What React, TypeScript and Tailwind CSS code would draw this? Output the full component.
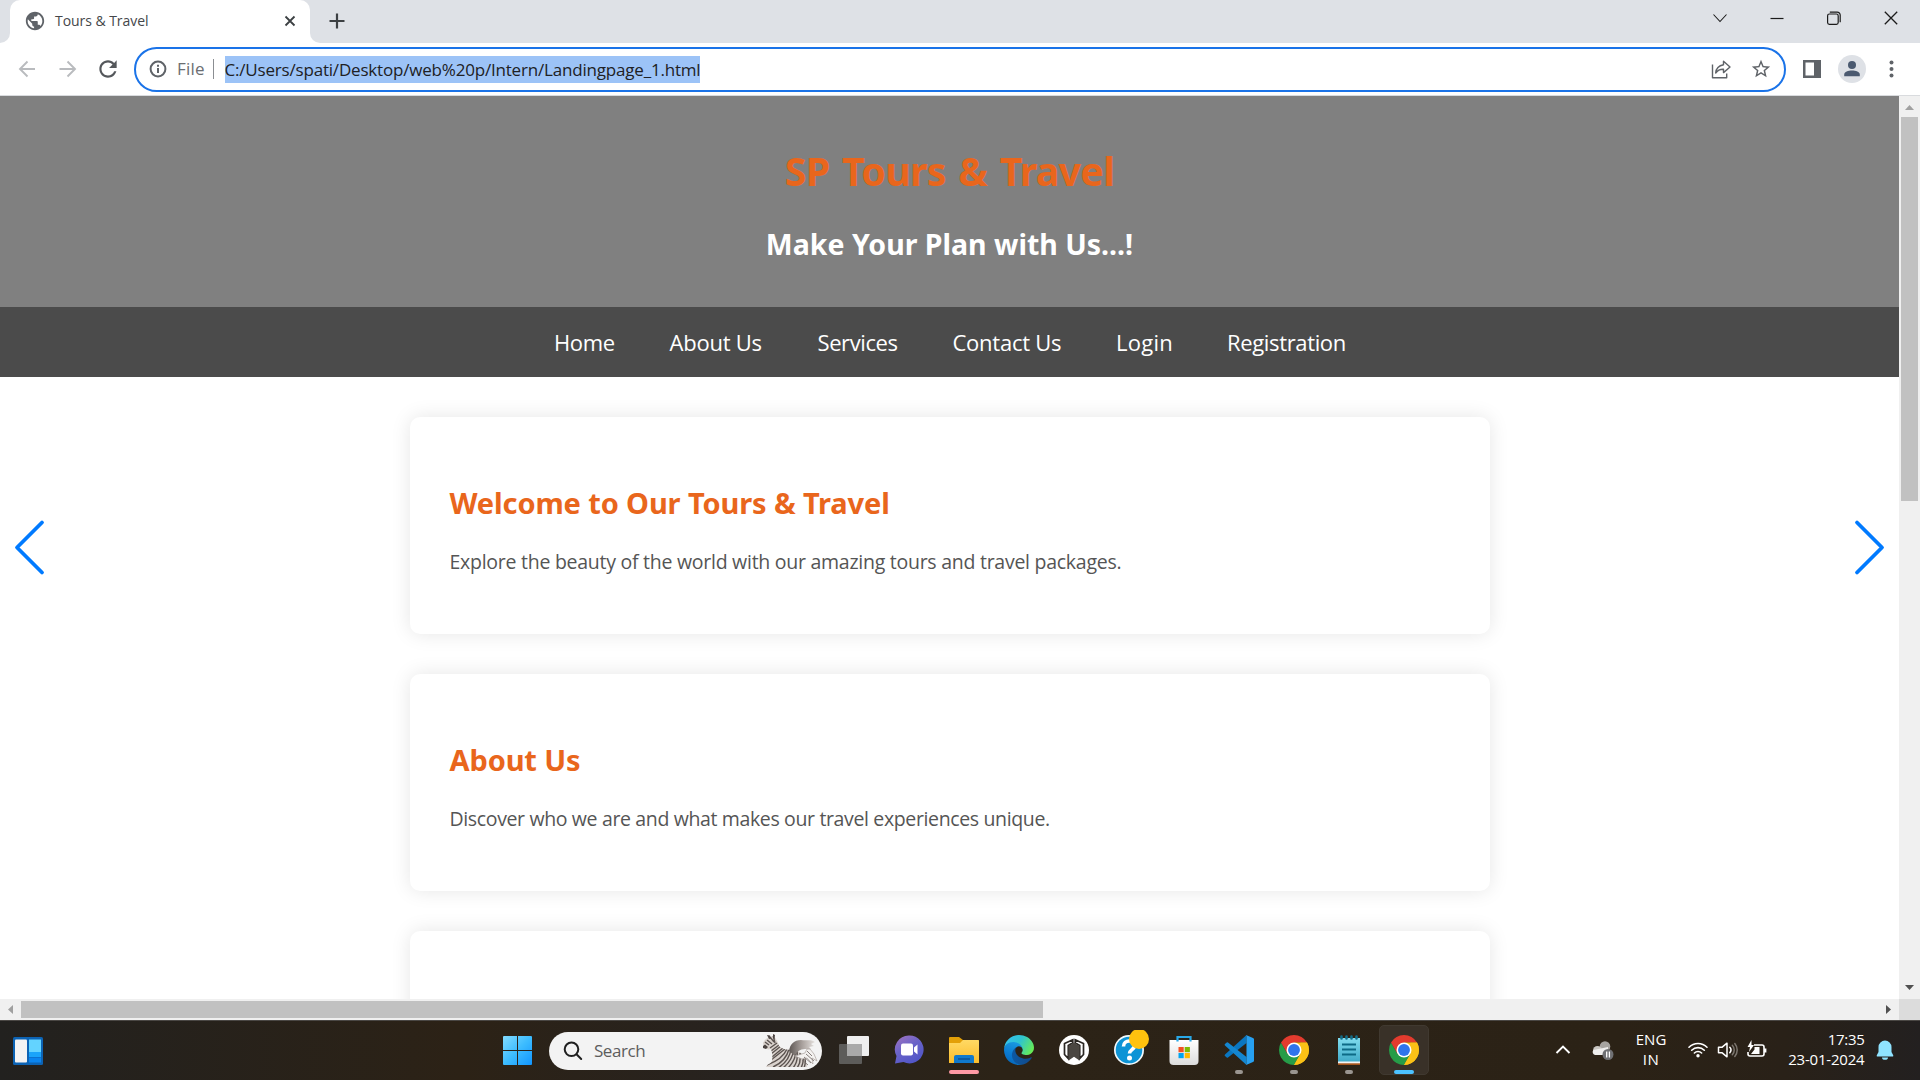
import React from 'react';

const navLinks = [
  { label: 'Home', cls: 'w-[115.5px] tracking-[-0.35px]' },
  { label: 'About Us', cls: 'w-[148px] tracking-[-0.24px]' },
  { label: 'Services', cls: 'w-[135px] tracking-[-0.4px]' },
  { label: 'Contact Us', cls: 'w-[163.5px] tracking-[-0.25px]' },
  { label: 'Login', cls: 'w-[111px] tracking-[0.25px]' },
  { label: 'Registration', cls: 'w-[125px] tracking-[-0.35px]' },
];

const cards = [
  {
    title: 'Welcome to Our Tours & Travel',
    titleCls: 'tracking-[-0.12px]',
    body: 'Explore the beauty of the world with our amazing tours and travel packages.',
    bodyCls: 'tracking-[-0.262px]',
  },
  {
    title: 'About Us',
    titleCls: 'tracking-[-0.13px]',
    body: 'Discover who we are and what makes our travel experiences unique.',
    bodyCls: 'tracking-[-0.358px]',
  },
];

function GlobeIcon() {
  return (
    <svg className="h-[22px] w-[22px]" viewBox="0 0 24 24" fill="#5f6368">
      <path d="M12 2C6.48 2 2 6.48 2 12s4.48 10 10 10 10-4.48 10-10S17.52 2 12 2zm-1 17.93c-3.95-.49-7-3.85-7-7.93 0-.62.08-1.21.21-1.79L9 15v1c0 1.1.9 2 2 2v1.93zm6.9-2.54c-.26-.81-1-1.39-1.9-1.39h-1v-3c0-.55-.45-1-1-1H8v-2h2c.55 0 1-.45 1-1V7h2c1.1 0 2-.9 2-2v-.41c2.93 1.19 5 4.06 5 7.41 0 2.08-.8 3.97-2.1 5.39z" />
    </svg>
  );
}

function TabStrip() {
  return (
    <div className="flex h-[43px] items-stretch bg-[#dee1e6] pr-px">
      <div className="flex w-[10px] items-end bg-white">
        <div className="h-full w-full rounded-br-[10px] bg-[#dee1e6]" />
      </div>
      <div className="w-[300px] bg-[#dee1e6]">
        <div className="flex h-full items-center rounded-t-[10px] bg-white pl-[14px] pr-[13px] pb-[1px]">
          <GlobeIcon />
          <span className="ml-[9px] flex-1 text-[14px] leading-5 tracking-[-0.05px] whitespace-nowrap text-[#45474a]">
            Tours &amp; Travel
          </span>
          <svg className="h-[14px] w-[14px]" viewBox="0 0 14 14" stroke="#3c4043" strokeWidth="1.8">
            <path d="M2.5 2.5l9 9M11.5 2.5l-9 9" />
          </svg>
        </div>
      </div>
      <div className="w-[10px] bg-white">
        <div className="h-full w-full rounded-bl-[10px] bg-[#dee1e6]" />
      </div>
      <div className="flex flex-1 items-center pb-px pl-[8px]">
        <svg className="h-[18px] w-[18px]" viewBox="0 0 18 18" stroke="#3c4043" strokeWidth="2.2">
          <path d="M9 1.5v15M1.5 9h15" />
        </svg>
      </div>
      <div className="mt-[-7px] flex items-center text-[#1b1b1b]">
        <div className="flex w-[57px] justify-center">
          <svg className="h-4 w-4" viewBox="0 0 16 16" fill="none" stroke="currentColor" strokeWidth="1.1">
            <path d="M1.5 4.5l6.5 7 6.5-7" />
          </svg>
        </div>
        <div className="flex w-[57px] justify-center">
          <svg className="h-4 w-4" viewBox="0 0 16 16" stroke="currentColor" strokeWidth="1.2">
            <path d="M1.5 8.5h13" />
          </svg>
        </div>
        <div className="flex w-[57px] justify-center">
          <svg className="h-4 w-4" viewBox="0 0 16 16" fill="none" stroke="currentColor" strokeWidth="1.2">
            <rect x="1.6" y="4" width="10.6" height="10.4" rx="1.8" />
            <path d="M3.8 2.1h7.4a3 3 0 0 1 3 3v7.2" />
          </svg>
        </div>
        <div className="flex w-[57px] justify-center">
          <svg className="h-4 w-4" viewBox="0 0 16 16" stroke="currentColor" strokeWidth="1.3">
            <path d="M1.8 1.8l12.4 12.4M14.2 1.8L1.8 14.2" />
          </svg>
        </div>
      </div>
    </div>
  );
}

function Toolbar() {
  return (
    <div className="flex h-[53px] items-center border-b border-[#d9dbde] bg-white pl-[18px]">
      <svg className="h-5 w-5" viewBox="0 0 20 20" fill="none" stroke="#b9bbbe" strokeWidth="1.9">
        <path d="M17 10H2.500M9.500 2.500L2 10l7.500 7.500" />
      </svg>
      <svg className="ml-5 h-5 w-5" viewBox="0 0 20 20" fill="none" stroke="#b9bbbe" strokeWidth="1.9">
        <path d="M1.500 10h15M9.500 2.500L17 10l-7.500 7.500" />
      </svg>
      <svg className="ml-[17px] h-[26px] w-[26px]" viewBox="0 0 24 24" fill="#54575b">
        <path d="M17.650 6.350C16.200 4.900 14.210 4 12 4c-4.420 0-7.990 3.580-7.990 8s3.570 8 7.990 8c3.730 0 6.840-2.550 7.730-6h-2.080c-.820 2.330-3.040 4-5.650 4-3.310 0-6-2.690-6-6s2.690-6 6-6c1.660 0 3.140.690 4.220 1.780L13 11h7V4l-2.350 2.350z" />
      </svg>
      <div className="ml-[13px] flex h-[45px] w-[1652px] items-center rounded-full border-[2.5px] border-[#1a73e8] bg-white pl-[13px] pr-[12px]">
        <svg className="h-[18px] w-[18px]" viewBox="0 0 18 18" fill="none" stroke="#5f6368" strokeWidth="2">
          <circle cx="9" cy="9" r="7.4" />
          <path d="M9 8v5M9 4.8v1.9" />
        </svg>
        <span className="ml-[10px] w-[35.5px] text-[17px] leading-6 tracking-[0.2px] text-[#6b6e72]">File</span>
        <div className="h-5 w-px bg-[#8b8e92]" />
        <div className="ml-[11px] bg-[#9cc3f7] text-[17px] leading-[27px] tracking-[-0.19px] whitespace-nowrap text-[#202124]">
          C:/Users/spati/Desktop/web%20p/Intern/Landingpage_1.html
        </div>
        <div className="flex-1" />
        <svg className="h-5 w-5" viewBox="0 0 20 20" fill="none" stroke="#5f6368" strokeWidth="1.4" strokeLinejoin="round">
          <path d="M1.500 5.500v13.200h14.200V14.500" />
          <path d="M12.500 2.200L19 8l-6.500 5.600v-3.300c-3.600-.2-5.800 1-7.800 3.700.4-4.600 3-7.500 7.800-8.300z" />
        </svg>
        <svg className="ml-[19px] h-[22px] w-[22px]" viewBox="0 0 24 24" fill="#5f6368">
          <path d="M22 9.240l-7.190-.620L12 2 9.190 8.630 2 9.240l5.460 4.730L5.820 21 12 17.270 18.180 21l-1.630-7.030L22 9.240zM12 15.400l-3.760 2.270 1-4.280-3.320-2.880 4.380-.380L12 6.100l1.710 4.040 4.380.380-3.320 2.880 1 4.280L12 15.400z" />
        </svg>
      </div>
      <svg className="ml-[16px] h-[20px] w-[20px]" viewBox="0 0 20 20" fill="#5f6368">
        <path fillRule="evenodd" d="M1 1h18v18H1zM3.500 3.500v13H12v-13z" />
      </svg>
      <div className="ml-[16px] flex h-7 w-7 items-center justify-center rounded-full bg-[#dee1e6]">
        <svg className="h-[18px] w-[18px]" viewBox="0 0 18 18" fill="#4b5a70">
          <circle cx="9" cy="5" r="4" />
          <path d="M1.200 16.200v-1.800c0-2.500 4-3.900 7.800-3.900s7.800 1.400 7.800 3.900v1.800z" />
        </svg>
      </div>
      <svg className="ml-[21px] h-5 w-[9px]" viewBox="0 0 9 20" fill="#5f6368">
        <circle cx="4.500" cy="3.500" r="2" />
        <circle cx="4.500" cy="10" r="2" />
        <circle cx="4.500" cy="16.500" r="2" />
      </svg>
    </div>
  );
}

function Page() {
  return (
    <div className="relative h-[903px] w-[1899px] overflow-hidden bg-white">
      <header className="flex h-[211px] flex-col items-center bg-[#808080] pt-[55px] font-['Noto_Sans',sans-serif] font-bold">
        <h1 className="text-[39.5px] leading-10 tracking-[-0.8px] text-[#e9661c] [word-spacing:3px]">SP Tours &amp; Travel</h1>
        <h2 className="mt-[33px] text-[28.5px] leading-10 text-white">Make Your Plan with Us...!</h2>
      </header>
      <nav className="flex h-[70px] items-center bg-[#4b4b4b] pl-[554px]">
        {navLinks.map((l) => (
          <a key={l.label} className={`pb-px text-[22px] leading-8 whitespace-nowrap text-white ${l.cls}`}>
            {l.label}
          </a>
        ))}
      </nav>
      <main className="flex flex-col gap-10 pt-10 pl-[409.5px]">
        {cards.map((c) => (
          <section key={c.title} className="h-[217px] w-[1080px] rounded-[10px] bg-white px-10 pt-[66px] shadow-[0_0_20px_rgba(0,0,0,0.1)]">
            <h2 className={`font-['Noto_Sans',sans-serif] text-[29px] leading-10 font-bold text-[#e9661c] ${c.titleCls}`}>{c.title}</h2>
            <p className={`mt-6 text-[19.5px] leading-[30px] text-[#555] ${c.bodyCls}`}>{c.body}</p>
          </section>
        ))}
        <section className="h-[217px] w-[1080px] rounded-[10px] bg-white shadow-[0_0_20px_rgba(0,0,0,0.1)]" />
      </main>
      <svg className="absolute top-[421px] left-[12px] h-[60px] w-[36px]" viewBox="0 0 36 60" fill="none" stroke="#007aff" strokeWidth="3.800" strokeLinecap="round" strokeLinejoin="round">
        <path d="M30 5.500L5 30.500l25 25" />
      </svg>
      <svg className="absolute top-[421px] left-[1851px] h-[60px] w-[36px]" viewBox="0 0 36 60" fill="none" stroke="#007aff" strokeWidth="3.800" strokeLinecap="round" strokeLinejoin="round">
        <path d="M6 5.500l25 25-25 25" />
      </svg>
    </div>
  );
}

function VerticalScrollbar() {
  return (
    <div className="flex w-[21px] flex-col items-start bg-[#f0f0f0]">
      <svg className="h-[21px] w-[21px]" viewBox="0 0 21 21" fill="#a0a0a0"><path d="M6 14l4.500-5 4.500 5z" /></svg>
      <div className="ml-[2px] h-[384px] w-[17px] bg-[#c1c1c1]" />
      <div className="flex-1" />
      <svg className="h-[21px] w-[21px]" viewBox="0 0 21 21" fill="#505050"><path d="M6 7h9l-4.500 5z" /></svg>
    </div>
  );
}

function HorizontalScrollbar() {
  return (
    <div className="flex h-[21px] items-center bg-[#f0f0f0]">
      <svg className="h-[21px] w-[21px]" viewBox="0 0 21 21" fill="#a0a0a0"><path d="M13 6v9l-5-4.500z" /></svg>
      <div className="h-[17px] w-[1022px] bg-[#c1c1c1]" />
      <div className="flex-1" />
      <svg className="h-[21px] w-[21px]" viewBox="0 0 21 21" fill="#505050"><path d="M8 6v9l5-4.500z" /></svg>
      <div className="h-[21px] w-[21px] bg-[#dcdcdc]" />
    </div>
  );
}

function WindowsLogo() {
  return (
    <svg className="h-[29px] w-[29px]" viewBox="0 0 29 29">
      <defs>
        <linearGradient id="win" x1="0" y1="0" x2="1" y2="1">
          <stop offset="0" stopColor="#83dcff" /><stop offset=".5" stopColor="#3dbcff" /><stop offset="1" stopColor="#1195ff" />
        </linearGradient>
      </defs>
      <path fill="url(#win)" d="M1 0h13v14H0V1a1 1 0 0 1 1-1zM15 0h13a1 1 0 0 1 1 1v13H15zM0 15h14v14H1a1 1 0 0 1-1-1zM15 15h14v13a1 1 0 0 1-1 1H15z" />
    </svg>
  );
}

function Zebra() {
  return (
    <svg className="h-[34px] w-[56px]" viewBox="0 0 56 34">
      <defs>
        <linearGradient id="wing" x1="0" y1="0" x2="1" y2="0">
          <stop offset="0" stopColor="#5d5653" /><stop offset=".5" stopColor="#a8a09c" /><stop offset="1" stopColor="#e6e2df" />
        </linearGradient>
        <clipPath id="zb">
          <path d="M1 9c1-3 4-5 6-6l4-1c3 2 5 6 6 10 3 3 8 4 13 4 7 0 12 4 14 10l1 7H4c1-3 5-3 6-6 1-5 0-9-1-12l-3 .5-4-2z" />
        </clipPath>
      </defs>
      <path fill="#d9d2cd" d="M1 9c1-3 4-5 6-6l4-1c3 2 5 6 6 10 3 3 8 4 13 4 7 0 12 4 14 10l1 7H4c1-3 5-3 6-6 1-5 0-9-1-12l-3 .5-4-2z" />
      <g clipPath="url(#zb)" fill="none" stroke="#5b5350" strokeWidth="1.400">
        <path d="M8 14l7-5M9 17l8-6M9 20l10-8M10 23l11-9M9 26l14-11M5 31c11-4 17-9 20-16M11 33c9-4 14-10 16-18M16 34c8-5 12-11 13-19M21 34c6-5 10-11 11-19M26 34c5-5 8-10 8-18M31 34c4-5 5-10 4-17M35 34c3-4 4-8 3-15M39 34c2-4 3-7 2-12M42 34c1-3 2-5 1-9" />
        <path d="M3 8l4 3M5 6l5 4M8 3l4 5M11 1l2 8" />
      </g>
      <path fill="#4c4441" d="M1 12l2-1.500 3 2.500-2 2-3-1zM5 1l3 .5 1 3-2 .5zM11 0l2 1-.5 4-1.500-1z" />
      <path fill="url(#wing)" d="M27 17c1-7 5-11 12-11 6 1 9-1 14 2l-4 2 3 2-5 1 2 2-6 0c-5 0-9 3-10 7z" />
      <path fill="#f4f2f0" stroke="#aaa29e" strokeWidth=".7" d="M33 22l10-3 2-4 3 0 4 5 3 7-5-3 1 6-6-6-5 1z" />
      <path stroke="#7b726e" strokeWidth=".9" fill="none" d="M45 17l5 5M44 20l8 7M42 23l7 6M40 26l6 5" />
    </svg>
  );
}

function TaskView() {
  return (
    <svg className="h-[30px] w-[32px]" viewBox="0 0 32 30">
      <rect x="1" y="9" width="23" height="20" rx="1" fill="#5d5c5a" />
      <rect x="9" y="1" width="22" height="20" rx="1" fill="#efefef" />
      <rect x="9" y="9" width="15" height="12" fill="#a9a9a9" />
    </svg>
  );
}

function ChatIcon() {
  return (
    <svg className="h-[30px] w-[30px]" viewBox="0 0 30 30">
      <defs>
        <linearGradient id="chat" x1="0" y1="0" x2=".6" y2="1">
          <stop offset="0" stopColor="#a474c0" /><stop offset=".5" stopColor="#6a63c8" /><stop offset="1" stopColor="#5156c8" />
        </linearGradient>
      </defs>
      <path fill="url(#chat)" d="M15.500.500a14 14 0 1 1-6 26.600L1 28.500l1.500-7.500A14 14 0 0 1 15.500.500z" />
      <rect x="7" y="8.500" width="12" height="12" rx="2" fill="#fff" />
      <path d="M20 12.500l3.500-3v10L20 16.500z" fill="#fff" />
    </svg>
  );
}

function FolderIcon() {
  return (
    <svg className="h-[30px] w-[32px]" viewBox="0 0 32 30">
      <defs>
        <linearGradient id="fold" x1="0" y1="0" x2="0" y2="1"><stop offset="0" stopColor="#ffd964" /><stop offset="1" stopColor="#fbbd2c" /></linearGradient>
      </defs>
      <path fill="#e3a008" d="M2 2h9l4 3h15a1 1 0 0 1 1 1v8H1V3a1 1 0 0 1 1-1z" />
      <path fill="url(#fold)" d="M1 8h11l3-3h15a1 1 0 0 1 1 1v22H1z" />
      <path fill="#1079cc" d="M6 28v-6a2 2 0 0 1 2-2h16a2 2 0 0 1 2 2v6z" />
      <path stroke="#0a5296" strokeWidth="1.5" d="M10 24h12" />
    </svg>
  );
}

function EdgeIcon() {
  return (
    <svg className="h-[30px] w-[30px]" viewBox="0 0 256 256">
      <defs>
        <linearGradient id="e1" x1="0" y1=".4" x2="1" y2=".5"><stop offset="0" stopColor="#0c59a4" /><stop offset="1" stopColor="#114a8b" /></linearGradient>
        <linearGradient id="e2" x1=".6" y1="0" x2=".3" y2="1"><stop offset="0" stopColor="#1b9de2" /><stop offset=".6" stopColor="#0a78d0" /><stop offset="1" stopColor="#0667b8" /></linearGradient>
        <linearGradient id="e3" x1="0" y1=".2" x2="1" y2=".6"><stop offset="0" stopColor="#35c1f1" /><stop offset=".5" stopColor="#2fc4cf" /><stop offset="1" stopColor="#66eb57" /></linearGradient>
      </defs>
      <path fill="url(#e1)" d="M231 190.500c-3.400 1.800-6.900 3.400-10.500 4.700a101.900 101.900 0 0 1-35.900 6.500c-47.300 0-88.500-32.500-88.500-74.300a31.500 31.500 0 0 1 16.400-27.300c-42.800 1.800-53.800 46.400-53.800 72.500 0 74 68.100 81.400 82.800 81.400 7.900 0 19.800-2.300 27-4.600l1.300-.4a128.300 128.300 0 0 0 66.600-52.800 4 4 0 0 0-5.400-5.700z" />
      <path fill="url(#e2)" d="M105.700 241.400A79.200 79.200 0 0 1 83 220.100a80.700 80.700 0 0 1 29.500-120c3.200-1.500 8.500-4.100 15.600-4a32.400 32.400 0 0 1 25.700 13 31.900 31.900 0 0 1 6.300 18.700c0-.2 24.500-79.600-80-79.600-43.900 0-80 41.600-80 78.200a130.200 130.200 0 0 0 12.100 56 128 128 0 0 0 156.400 67 75.500 75.500 0 0 1-62.900-8z" />
      <path fill="url(#e3)" d="M152.300 148.900c-.9 1-3.400 2.500-3.400 5.600 0 2.600 1.700 5.200 4.800 7.300 14.300 10 41.400 8.600 41.500 8.600 10.700 0 21.100-2.900 30.300-8.300a61.400 61.400 0 0 0 30.400-52.900c.3-22.400-8-37.300-11.300-43.900C223.500 23.900 177.700 0 128 0A128 128 0 0 0 0 126.200c.5-36.500 36.800-66 80-66 3.500 0 23.500.3 42 10.100 16.300 8.600 24.900 18.900 30.800 29.200 6.200 10.700 7.300 24.100 7.300 29.500 0 5.300-2.700 13.300-7.800 19.900z" />
    </svg>
  );
}

function PageFoldIcon() {
  return (
    <svg className="h-[30px] w-[30px]" viewBox="0 0 30 30" fill="none" stroke="#2a2622">
      <circle cx="15" cy="15" r="15" fill="#fff" stroke="none" />
      <path d="M13.800 4.800L5.500 8.500v11l3.800 4V10.500l4.500-2.700zM16.200 4.800l8.300 3.700v11l-3.800 4V10.500l-4.500-2.700z" strokeWidth="1.700" />
      <path fill="#4a4641" stroke="none" d="M15 7.500l5.500 3.500v14.500L15 21.800l-5.500 3.700V11z" />
    </svg>
  );
}

function HelpIcon() {
  return (
    <svg className="h-[40px] w-[40px]" viewBox="0 0 40 40">
      <circle cx="20" cy="20" r="15" fill="#f4fafd" />
      <circle cx="20" cy="20" r="13.300" fill="#0d94d6" />
      <path d="M14.500 16.500c0-7.500 11.500-7 11-.5-.3 3.500-5 3.800-5 7.500" fill="none" stroke="#fff" strokeWidth="3.600" />
      <circle cx="20.500" cy="28" r="2.500" fill="#fff" />
      <circle cx="30" cy="9" r="10" fill="#ffc20e" />
    </svg>
  );
}

function StoreIcon() {
  return (
    <svg className="h-[30px] w-[30px]" viewBox="0 0 30 30">
      <defs><linearGradient id="st" x1="0" y1="0" x2="0" y2="1"><stop offset="0" stopColor="#fff" /><stop offset="1" stopColor="#dcdcdc" /></linearGradient></defs>
      <path d="M.500 5h29v21a4 4 0 0 1-4 4h-21a4 4 0 0 1-4-4z" fill="url(#st)" />
      <path d="M8.500 6.500V2h13v4.500" fill="none" stroke="#29a9e8" strokeWidth="2.200" />
      <path fill="#f25022" d="M9.500 12h5.200v5.200H9.500z" /><path fill="#7fba00" d="M15.700 12h5.200v5.200h-5.200z" />
      <path fill="#00a4ef" d="M9.500 18h5.200v5.200H9.500z" /><path fill="#ffb900" d="M15.700 18h5.200v5.200h-5.200z" />
    </svg>
  );
}

function VsCodeIcon() {
  return (
    <svg className="h-[30px] w-[30px]" viewBox="0 0 30 30">
      <path fill="#0a76c0" d="M1 19.500L22.500 0v8L4 22.500a1 1 0 0 1-1.300 0L1 21a1 1 0 0 1 0-1.500z" />
      <path fill="#1486d0" d="M1 10.500L22.500 30v-8L4 7.500a1 1 0 0 0-1.300 0L1 9a1 1 0 0 0 0 1.500z" />
      <path fill="#27a0f0" d="M22 0l7 3a1.500 1.500 0 0 1 1 1.500v21a1.500 1.500 0 0 1-1 1.500l-7 3c.4-.4.5-1 .5-1.500v-27C22.500 1 22.400.400 22 0z" />
    </svg>
  );
}

function ChromeIcon() {
  return (
    <svg className="h-[30px] w-[30px]" viewBox="0 0 48 48">
      <path d="M3.220 12L13.600 30l10.400 5 .39 0L24 48A24 24 0 0 1 3.220 12z" fill="#269c48" />
      <path d="M24 48l10.390-18V12h10.390A24 24 0 0 1 24 48z" fill="#fbc116" />
      <path d="M24 48l10.390-18L24 24l-10.400 6L24 40z" fill="#269c48" />
      <path d="M44.780 12H24l-10.400 18L3.220 12a24 24 0 0 1 41.560 0z" fill="#e33b2e" />
      <path d="M44.780 12H24l10.390 18L24 48A24 24 0 0 0 44.780 12z" fill="#fbc116" />
      <circle cx="24" cy="24" r="12" fill="#fff" />
      <circle cx="24" cy="24" r="9.500" fill="#2f74ec" />
    </svg>
  );
}

function NotepadIcon() {
  return (
    <svg className="h-[31px] w-[24px]" viewBox="0 0 24 31">
      <defs><linearGradient id="np" x1="0" y1="0" x2="0" y2="1"><stop offset="0" stopColor="#7fdcee" /><stop offset="1" stopColor="#41abc9" /></linearGradient></defs>
      <path fill="#a4531a" d="M1 26h22v4H1z" />
      <path fill="#f3f3f3" d="M1 25h22v3.300H1z" />
      <path fill="url(#np)" d="M1 3h22v23.500H1z" />
      <path stroke="#0d6a86" strokeWidth="2" d="M5 9.500h14M5 14.500h14M5 19.500h14" />
      <path stroke="#136d88" strokeWidth="2.600" strokeLinecap="round" d="M4.500 1.500v2M9.500 1.500v2M14.500 1.500v2M19.500 1.500v2" />
    </svg>
  );
}

const apps: { name: string; icon: React.ReactNode; bar?: string; active?: boolean }[] = [
  { name: 'tasks', icon: <TaskView /> },
  { name: 'chat', icon: <ChatIcon /> },
  { name: 'files', icon: <FolderIcon />, bar: 'w-[30px] bg-[#ff99a4]' },
  { name: 'edge', icon: <EdgeIcon /> },
  { name: 'fold', icon: <PageFoldIcon /> },
  { name: 'help', icon: <HelpIcon /> },
  { name: 'store', icon: <StoreIcon /> },
  { name: 'code', icon: <VsCodeIcon />, bar: 'w-2 bg-[#9a9590]' },
  { name: 'chrome1', icon: <ChromeIcon />, bar: 'w-2 bg-[#9a9590]' },
  { name: 'notepad', icon: <NotepadIcon />, bar: 'w-2 bg-[#9a9590]' },
  { name: 'chrome2', icon: <ChromeIcon />, bar: 'w-5 bg-[#4cc2ff]', active: true },
];

function Tray() {
  return (
    <div className="flex h-full flex-1 items-center pb-px text-white">
      <svg className="ml-[123px] h-4 w-4" viewBox="0 0 16 16" fill="none" stroke="#fff" strokeWidth="1.900">
        <path d="M1.500 11L8 4.500l6.500 6.500" />
      </svg>
      <svg className="ml-[21px] h-[22px] w-[22px]" viewBox="0 0 22 22">
        <circle cx="13" cy="7.500" r="5.300" fill="#a6a39f" />
        <circle cx="5.500" cy="11.500" r="4.500" fill="#c9c6c2" />
        <path fill="#efeeed" d="M3 16a3 3 0 0 1-1.500-5L16 8v8z" />
        <circle cx="16" cy="15.500" r="5.500" fill="#6f7073" />
        <path stroke="#fff" strokeWidth="1.300" d="M14.700 12.500v6M17.400 12.500v6" />
      </svg>
      <div className="ml-[22px] flex w-[31px] flex-col items-center pb-[2px] text-[15px] leading-5">
        <span className="tracking-[0.05px]">ENG</span>
        <span className="tracking-[0.5px]">IN</span>
      </div>
      <svg className="ml-[21px] h-[20px] w-[20px]" viewBox="0 0 20 20" fill="none" stroke="#fff" strokeWidth="1.600" strokeLinecap="round">
        <path d="M1 7.200a12.700 12.700 0 0 1 18 0M3.700 10.200a8.900 8.900 0 0 1 12.600 0M6.400 13a5.100 5.100 0 0 1 7.200 0" />
        <circle cx="10" cy="15.700" r="1.700" fill="#fff" stroke="none" />
      </svg>
      <svg className="ml-[9px] h-[20px] w-[21px]" viewBox="0 0 21 20" fill="none" stroke="#fff" strokeWidth="1.500" strokeLinejoin="round">
        <path d="M1.500 7.200h3.700L10 3.200v13.600l-4.800-4H1.500z" />
        <path strokeLinecap="round" d="M12.800 7.300a4 4 0 0 1 0 5.400" />
        <path stroke="#7b756e" strokeLinecap="round" d="M15.300 5.200a7 7 0 0 1 0 9.600M17.800 3.500a10 10 0 0 1 0 13" />
      </svg>
      <svg className="ml-[8px] h-[20px] w-[22px]" viewBox="0 0 22 20" fill="none" stroke="#fff" strokeWidth="1.600">
        <path d="M8 5h8a2 2 0 0 1 2 2v7a2 2 0 0 1-2 2H4a2 2 0 0 1-2-2v-2M19.600 8.500v4" />
        <path fill="#fff" stroke="none" d="M8.500 7h5v7H5l3.500-4.500zM5.500 0L1.500 7H4l-1 5 5-7H5.500z" />
      </svg>
      <div className="ml-[17px] flex w-[80px] flex-col items-end pb-[3px] text-[15px] leading-5">
        <span className="tracking-[-0.29px]">17:35</span>
        <span className="tracking-[-0.19px]">23-01-2024</span>
      </div>
      <svg className="ml-[11px] h-5 w-[18px]" viewBox="0 0 18 20" fill="#8fe3ff">
        <path d="M9 .5a6.500 6.500 0 0 0-6.500 6.500v5L.8 15.200c-.3.800 0 1.300.8 1.300h14.800c.8 0 1.100-.5.8-1.300L15.500 12V7A6.500 6.500 0 0 0 9 .5zM6 17.500a3 2.300 0 0 0 6 0z" />
      </svg>
    </div>
  );
}

function Taskbar() {
  return (
    <div className="flex h-[60px] items-center border-t border-[#4a4744] bg-[linear-gradient(90deg,#22211f_0%,#2c2216_24%,#272320_39%,#2c2317_52%,#2b2216_84%,#292118_93%,#232020_100%)]">
      <svg className="ml-[13px] h-[28px] w-[30px]" viewBox="0 0 30 28">
        <rect width="30" height="28" rx="1.5" fill="#0c63b4" />
        <rect x="2" y="2.500" width="12" height="23" rx="1" fill="#f3f3f3" />
        <path fill="#63d3ff" d="M16 2.500h12V15H16z" /><path fill="#1aa4fa" d="M16 15h12v5H16z" /><path fill="#0a84ee" d="M16 20.500h12v5H16z" />
      </svg>
      <div className="ml-[447px] flex w-[55px] justify-center"><WindowsLogo /></div>
      <div className="ml-1 flex h-[38px] w-[273px] items-center rounded-full bg-[#f3f3f3] pl-[14px] pr-1">
        <svg className="h-5 w-5" viewBox="0 0 20 20" fill="none" stroke="#202020" strokeWidth="2">
          <circle cx="8.500" cy="8.300" r="6.800" /><path strokeLinecap="round" d="M13.500 13.300l4.700 4.700" />
        </svg>
        <span className="ml-[11px] flex-1 text-[17px] leading-6 tracking-[-0.45px] text-[#5d5d5d]">Search</span>
        <Zebra />
      </div>
      <div className="ml-[4.5px] flex h-full">
        {apps.map((a) => (
          <div key={a.name} className="relative flex h-full w-[55px] items-center justify-center pb-px">
            {a.active && <div className="absolute inset-x-[2.5px] top-[4px] h-[50px] rounded-[5px] border border-[#403930] bg-[#393128]" />}
            <div className="relative">{a.icon}</div>
            {a.bar && <div className={`absolute bottom-[6px] h-1 rounded-full ${a.bar}`} />}
          </div>
        ))}
      </div>
      <Tray />
    </div>
  );
}

export default function App() {
  return (
    <div className="flex h-[1080px] w-[1920px] flex-col overflow-hidden bg-white font-['Open_Sans','Noto_Sans',sans-serif]">
      <TabStrip />
      <Toolbar />
      <div className="flex h-[903px]">
        <Page />
        <VerticalScrollbar />
      </div>
      <HorizontalScrollbar />
      <Taskbar />
    </div>
  );
}
